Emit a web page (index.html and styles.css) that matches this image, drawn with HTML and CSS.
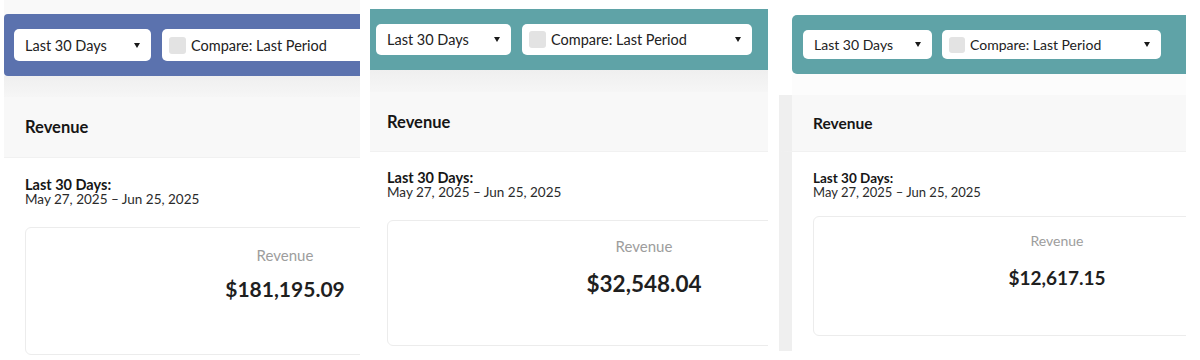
FILE: index.html
```html
<!DOCTYPE html>
<html lang="en">
<head>
<meta charset="utf-8">
<title>Revenue</title>
<link rel="stylesheet" href="styles.css">
</head>
<body>
<main class="stage">
  <section class="panel p1">
    <div class="bar bar-blue">
      <div class="select sel-range"><span class="sel-text">Last 30 Days</span><span class="caret"></span></div>
      <div class="select sel-compare"><span class="check"></span><span class="sel-text">Compare: Last Period</span><span class="caret"></span></div>
    </div>
    <div class="content">
      <div class="gap"></div>
      <div class="head">Revenue</div>
      <div class="body">
        <div class="period"><strong class="period-title">Last 30 Days:</strong><span class="period-range">May 27, 2025 – Jun 25, 2025</span></div>
        <div class="metric"><div class="metric-label">Revenue</div><div class="metric-value">$181,195.09</div></div>
      </div>
    </div>
  </section>

  <section class="panel p2">
    <div class="bar bar-teal">
      <div class="select sel-range"><span class="sel-text">Last 30 Days</span><span class="caret"></span></div>
      <div class="select sel-compare"><span class="check"></span><span class="sel-text">Compare: Last Period</span><span class="caret"></span></div>
    </div>
    <div class="content">
      <div class="gap"></div>
      <div class="head">Revenue</div>
      <div class="body">
        <div class="period"><strong class="period-title">Last 30 Days:</strong><span class="period-range">May 27, 2025 – Jun 25, 2025</span></div>
        <div class="metric"><div class="metric-label">Revenue</div><div class="metric-value">$32,548.04</div></div>
      </div>
    </div>
  </section>

  <section class="panel p3">
    <div class="bar bar-teal">
      <div class="select sel-range"><span class="sel-text">Last 30 Days</span><span class="caret"></span></div>
      <div class="select sel-compare"><span class="check"></span><span class="sel-text">Compare: Last Period</span><span class="caret"></span></div>
    </div>
    <div class="content">
      <div class="gap"></div>
      <div class="head">Revenue</div>
      <div class="body">
        <div class="period"><strong class="period-title">Last 30 Days:</strong><span class="period-range">May 27, 2025 – Jun 25, 2025</span></div>
        <div class="metric"><div class="metric-label">Revenue</div><div class="metric-value">$12,617.15</div></div>
      </div>
    </div>
  </section>
</main>
</body>
</html>
```

FILE: styles.css
```css
* { box-sizing: border-box; }
html, body { margin: 0; padding: 0; }
body {
  background: #ffffff;
  font-family: "Lato", "Open Sans", sans-serif;
  color: #1d1d1f;
  width: 1200px;
  height: 360px;
  overflow: hidden;
}
.stage {
  display: flex;
  align-items: flex-start;
  height: 360px;
  overflow: hidden;
}
.panel {
  overflow: hidden;
  flex: none;
  display: flex;
  flex-direction: column;
}

/* ---------- filter bar ---------- */
.bar {
  display: flex;
  align-items: center;
  gap: 11px;
  flex: none;
}
.bar-blue { background: #5b72ae; }
.bar-teal { background: #5fa3a7; }

.select {
  flex: none;
  display: flex;
  align-items: center;
  background: #ffffff;
  border-radius: 5px;
  padding: 0 11px;
  color: #222;
}
.sel-text { flex: 1; white-space: nowrap; }
.caret {
  flex: none;
  width: 0;
  height: 0;
  border-left: 3px solid transparent;
  border-right: 3px solid transparent;
  border-top: 5px solid #1a1a1a;
}
.sel-compare { padding-left: 7px; }
.check {
  flex: none;
  width: 17px;
  height: 17px;
  border-radius: 3px;
  background: #e3e3e3;
  margin-right: 5px;
}

/* ---------- content ---------- */
.content { display: flex; flex-direction: column; }
.gap { background: linear-gradient(#efefef, #f6f6f6); flex: none; }
.head {
  background: #f8f8f8;
  display: flex;
  align-items: center;
  font-weight: 700;
  color: #161616;
  border-bottom: 1px solid #f1f1f1;
}
.body { background: #ffffff; display: flex; flex-direction: column; }
.period { display: flex; flex-direction: column; }
.period-title { font-weight: 700; color: #161616; }
.period-range { color: #2a2a2a; }
.metric {
  border: 1px solid #ececec;
  border-radius: 6px;
  display: flex;
  flex-direction: column;
  align-items: center;
  flex: none;
}
.metric-label { color: #9d9d9d; }
.metric-value { font-weight: 700; color: #1f1f1f; }

/* ---------- panel 1 ---------- */
.p1 { width: 356px; margin-left: 4px; padding-top: 14px; background: #f9f9f9; }
.p1 .bar { height: 62px; padding-left: 10px; border-radius: 4px 0 0 4px; }
.p1 .select { height: 32px; font-size: 14.5px; }
.p1 .sel-range { width: 137px; }
.p1 .sel-compare { width: 230px; }
.p1 .gap { height: 21px; }
.p1 .head { height: 61px; padding-left: 21px; font-size: 16.5px; }
.p1 .body { padding: 19px 0 4px 21px; }
.p1 .period-title { font-size: 14.5px; line-height: 15px; }
.p1 .period-range { font-size: 13.5px; line-height: 15px; }
.p1 .metric { width: 520px; height: 128px; margin-top: 20px; padding-top: 17px; }
.p1 .metric-label { font-size: 15px; line-height: 20px; }
.p1 .metric-value { font-size: 21px; line-height: 30px; margin-top: 9px; }

/* ---------- panel 2 ---------- */
.p2 { width: 398px; margin-left: 10px; padding-top: 9px; }
.p2 .bar { height: 61px; padding-left: 6px; }
.p2 .select { height: 31px; font-size: 14.5px; }
.p2 .sel-range { width: 135px; }
.p2 .sel-compare { width: 230px; }
.p2 .gap { height: 22px; }
.p2 .head { height: 60px; padding-left: 17px; font-size: 16.5px; }
.p2 .body { padding: 18px 0 14px 17px; }
.p2 .period-title { font-size: 14.5px; line-height: 15px; }
.p2 .period-range { font-size: 13.5px; line-height: 15px; }
.p2 .metric { width: 514px; height: 126px; margin-top: 20px; padding-top: 15px; }
.p2 .metric-label { font-size: 15px; line-height: 20px; }
.p2 .metric-value { font-size: 22.5px; line-height: 30px; margin-top: 13px; }

/* ---------- panel 3 ---------- */
.p3 { width: 407px; margin-left: 11px; padding-top: 15px; }
.p3 .bar { height: 59px; margin-left: 13px; padding-left: 11px; border-radius: 5px 0 0 5px; gap: 10px; }
.p3 .select { height: 29px; font-size: 14px; }
.p3 .sel-range { width: 129px; }
.p3 .sel-compare { width: 219px; }
.p3 .check { width: 16px; height: 16px; }
.p3 .gap { height: 21px; background: #fcfcfc; margin-left: 13px; }
.p3 .head { height: 57px; padding-left: 21px; font-size: 15.5px; border-left: 13px solid #efefef; }
.p3 .body { padding: 19px 0 15px 21px; border-left: 13px solid #efefef; }
.p3 .period-title { font-size: 13.5px; line-height: 14px; }
.p3 .period-range { font-size: 13px; line-height: 14px; }
.p3 .metric { width: 488px; height: 120px; margin-top: 17px; padding-top: 14px; }
.p3 .metric-label { font-size: 14px; line-height: 20px; }
.p3 .metric-value { font-size: 19px; line-height: 28px; margin-top: 13px; }
```
